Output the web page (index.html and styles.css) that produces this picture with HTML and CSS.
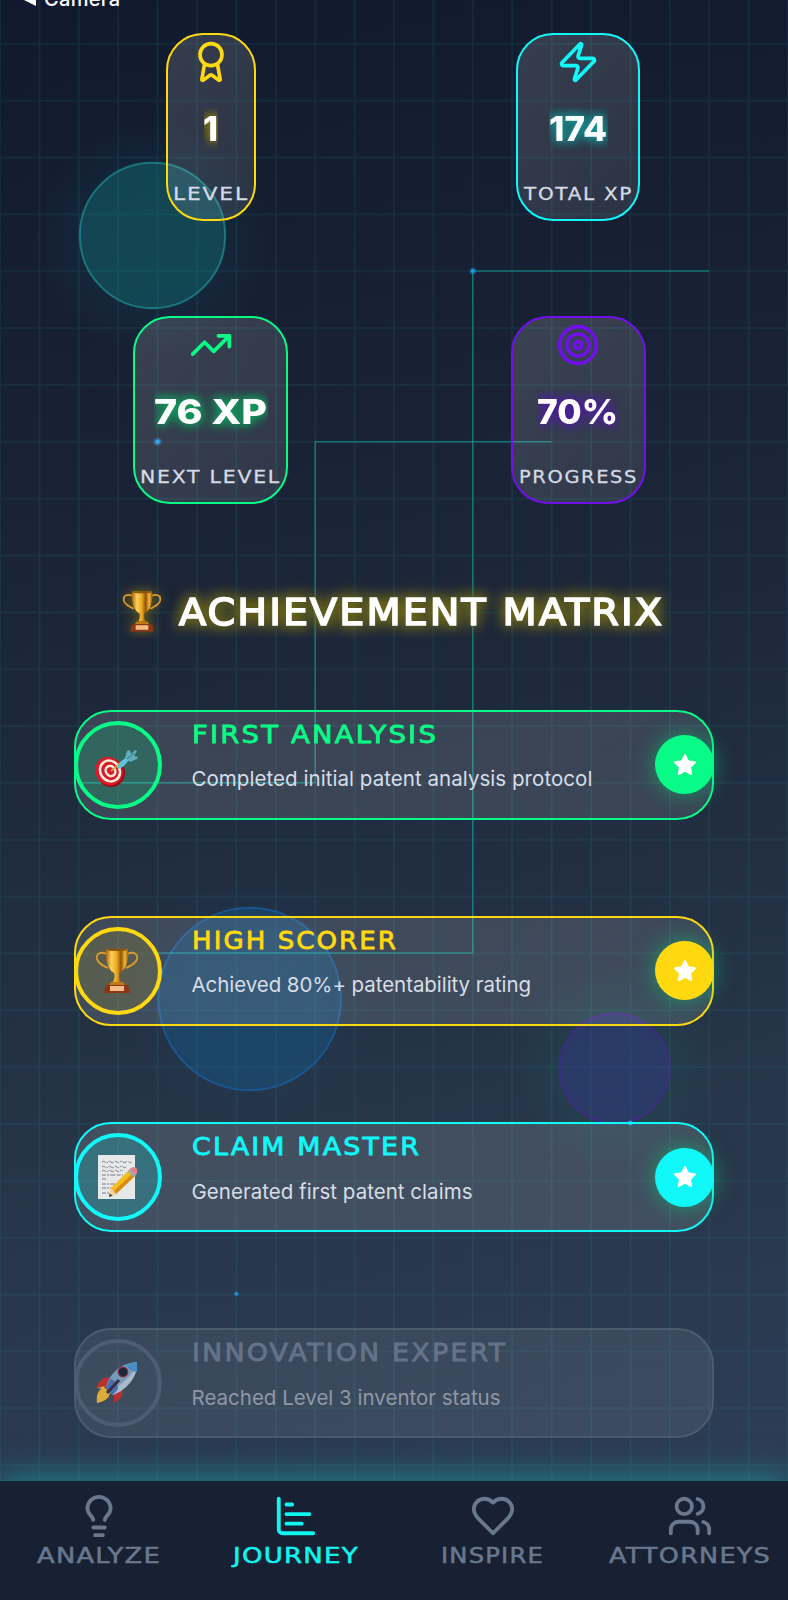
FILE: index.html
```html
<!DOCTYPE html>
<html lang="en">
<head>
<meta charset="utf-8">
<title>Journey</title>
<link rel="stylesheet" href="styles.css">
</head>
<body>
<svg class="backdrop" width="788" height="1600" viewBox="0 0 788 1600">
  <defs>
    <pattern id="grid" width="39.4" height="56.85" patternUnits="userSpaceOnUse" patternTransform="translate(0 -13)">
      <path d="M39.4 0V56.85M0 56.85H39.4M0 0V56.85M0 0H39.4" fill="none" stroke="#1fb5ad" stroke-opacity=".11" stroke-width="1.6"/>
    </pattern>
    <radialGradient id="halo-cyan"><stop offset=".55" stop-color="#00c8c8" stop-opacity=".055"/><stop offset="1" stop-color="#00c8c8" stop-opacity="0"/></radialGradient>
    <radialGradient id="halo-blue"><stop offset=".55" stop-color="#0080d0" stop-opacity=".05"/><stop offset="1" stop-color="#0080d0" stop-opacity="0"/></radialGradient>
    <radialGradient id="halo-green"><stop offset=".4" stop-color="#00c8a0" stop-opacity=".07"/><stop offset="1" stop-color="#00c8a0" stop-opacity="0"/></radialGradient>
  </defs>
  <rect width="788" height="1600" fill="url(#grid)"/>
  <circle cx="152.5" cy="235.5" r="118" fill="url(#halo-cyan)"/>
  <circle cx="152.5" cy="235.5" r="72.7" fill="#0fa0a0" fill-opacity=".25" stroke="#22b8b8" stroke-opacity=".5" stroke-width="2"/>
  <circle cx="249.7" cy="999" r="125" fill="url(#halo-blue)"/>
  <circle cx="249.7" cy="999" r="91.3" fill="#0a70b0" fill-opacity=".27" stroke="#147ad8" stroke-opacity=".42" stroke-width="2"/>
  <circle cx="614.5" cy="1068.5" r="105" fill="url(#halo-green)"/>
  <circle cx="614.5" cy="1068.5" r="55" fill="#4030b0" fill-opacity=".26" stroke="#6a14d0" stroke-opacity=".36" stroke-width="2"/>
  <g fill="none" stroke="#14b8ae" stroke-opacity=".5" stroke-width="1.5">
    <path d="M709 271H472.8V953H157.6"/>
    <path d="M551.5 441.7H315.2V782.8H78.8"/>
  </g>
  <g fill="#1d9be8">
    <g fill-opacity=".35"><circle cx="472.8" cy="271" r="3.5"/><circle cx="157.6" cy="441.7" r="4"/><circle cx="236.4" cy="1293.8" r="2.5"/></g>
    <circle cx="472.8" cy="271" r="2"/><circle cx="157.6" cy="441.7" r="2.2"/><circle cx="236.4" cy="1293.8" r="1.6"/><circle cx="630.4" cy="1123" r="2.4"/>
  </g>
</svg>

<svg width="0" height="0" class="symbols">
  <symbol id="trophy" viewBox="0 0 44 46">
    <defs><linearGradient id="gold"><stop offset="0" stop-color="#a95b0a"/><stop offset=".25" stop-color="#ffd35a"/><stop offset=".5" stop-color="#e9a41e"/><stop offset=".68" stop-color="#8c5206"/><stop offset=".85" stop-color="#f3b638"/><stop offset="1" stop-color="#a05a08"/></linearGradient></defs>
    <path d="M12 6C5 3 1 6 2 11c1 4 5 6 11 9M32 6c7-3 11 0 10 5-1 4-5 6-11 9" fill="none" stroke="#d99a2c" stroke-width="1.9"/>
    <path d="M11 1h22c1 10-1 20-8 24-1 2-1 5 1 9h-8c2-4 2-7 1-9-7-4-9-14-8-24z" fill="url(#gold)"/>
    <ellipse cx="22" cy="1.8" rx="11" ry="1.3" fill="#8f5709"/>
    <path d="M16 34h12l2 3H14z" fill="#c07818"/>
    <path d="M11 37h22l2 8H9z" fill="#8f3515"/><path d="M15 38h14v5H15z" fill="#f4bd86"/>
  </symbol>
  <symbol id="dart" viewBox="0 0 44 38">
    <ellipse cx="17" cy="24" rx="14" ry="14" fill="#9e0b18"/>
    <ellipse cx="15" cy="22" rx="13.500" ry="14.500" fill="#d91c2b" transform="rotate(-35 15 22)"/>
    <g fill="none" stroke="#fbeeda" stroke-width="2.5"><ellipse cx="16" cy="22" rx="9.6" ry="10.8" transform="rotate(-35 16 22)"/><ellipse cx="16.5" cy="22" rx="4.6" ry="5.3" transform="rotate(-35 16.5 22)"/></g>
    <path d="M17 22l9-8" stroke="#d9a53a" stroke-width="1.6"/>
    <path d="M23 18l3-5 7-5 2 3-5 6-5 3z" fill="#62c4d6"/>
    <path d="M31 9l2-7 3-1 1 4 4-4 2 1-3 5 4 1-1 2-7 3z" fill="#63aebc"/><path d="M33 10l7-6" stroke="#2f7286" stroke-width="1"/>
  </symbol>
  <symbol id="memo" viewBox="0 0 40 46">
    <path d="M1 1h37v44H1z" fill="#e7e8ea"/>
    <g fill="none" stroke="#6d6f75" stroke-width=".9" stroke-dasharray="4 1.2 2 1 5 1.5"><path d="M5 8q1.500-1.500 3 0t3 0 3 0 3 0 3 0 3 0 3 0 3 0 3 0 3 0M5 13q1.500-1.500 3 0t3 0 3 0 3 0 3 0 3 0 3 0 3 0M5 17q1.500-1.500 3 0t3 0 3 0 3 0 3 0 3 0 3 0M5 21h21M5 25h5M5 30h13M5 34h10M5 39h8"/></g>
    <path d="M12 43l2-9 19-19 6 6-20 19z" fill="#f5bd22"/><path d="M17 37l19-18 3 2-20 19z" fill="#d98c12"/>
    <path d="M12 43l2-9 5 6z" fill="#f0d3a0"/><path d="M12 43l.8-3.500 2.700 2.200z" fill="#333"/>
    <path d="M31 17l3-3 5 6-3 3z" fill="#9faab3"/><path d="M33 15q4-4 7 0 1 3-1 6z" fill="#ec7d8a"/>
  </symbol>
  <symbol id="rocket" viewBox="0 0 44 44">
    <path d="M15 17C8 15 4 20 1 27c4-2 9-1 12-1zM27 28c2 6-1 11-9 14 2-5 0-9 1-12z" fill="#c52f28"/>
    <path d="M9 26C3 29 1 34 2 42c6-1 12-4 13-10z" fill="#f0b534"/><path d="M2 27l8-2-2 3z" fill="#f3b53a"/>
    <path d="M11 27C13 15 24 2 42 1c1 14-9 27-24 33z" fill="#7fa4c4"/>
    <path d="M18 34C33 28 43 15 42 1c-3 12-12 20-27 30z" fill="#b5c6d4"/>
    <path d="M31 4l11-3v10C37 11 33 8 31 4z" fill="#4c95d2"/>
    <path d="M11 27l4-9c3 0 9 6 8 10l-5 6z" fill="#4b73b5"/><path d="M12 32l12-13" stroke="#392b42" stroke-width="3"/>
    <circle cx="28" cy="11" r="5.400" fill="#8e263b"/><circle cx="28" cy="11" r="4" fill="#182235"/>
  </symbol>
  <symbol id="star" viewBox="0 0 24 24"><path d="M12 2.200l3 6.200 6.900.9-5 4.800 1.200 6.900L12 17.600 5.900 21l1.200-6.900-5-4.800 6.900-.9z" fill="#fff" stroke="#fff" stroke-width="2.200" stroke-linejoin="round"/></symbol>
</svg>

<div class="screen">
  <div class="back-link"><svg width="12" height="12" viewBox="0 0 12 12"><path d="M0 6L12 0v12z" fill="#fff"/></svg><span>Camera</span></div>

  <section class="stats">
    <div class="stat gold w-level">
      <svg class="icon" viewBox="0 0 24 24"><path d="m15.477 12.890 1.515 8.526a.5.5 0 0 1-.81.470l-3.580-2.687a1 1 0 0 0-1.197 0l-3.586 2.686a.5.5 0 0 1-.81-.469l1.514-8.526"/><circle cx="12" cy="8" r="6"/></svg>
      <svg class="value" width="14" height="44"><text x="-1" y="34" textLength="15" lengthAdjust="spacingAndGlyphs">1</text></svg>
      <svg class="label" width="75" height="24"><text x="0" y="17.500" textLength="76" lengthAdjust="spacingAndGlyphs">LEVEL</text></svg>
    </div>
    <div class="stat cyan w-total">
      <svg class="icon" viewBox="0 0 24 24"><path d="M4 14a1 1 0 0 1-.78-1.630l9.900-10.200a.5.5 0 0 1 .86.460l-1.920 6.020A1 1 0 0 0 13 10h7a1 1 0 0 1 .78 1.630l-9.900 10.200a.5.5 0 0 1-.86-.460l1.920-6.020A1 1 0 0 0 11 14z"/></svg>
      <svg class="value" width="59" height="44"><text x="0" y="34" textLength="58" lengthAdjust="spacingAndGlyphs">174</text></svg>
      <svg class="label" width="108" height="24"><text x="0" y="17.500" textLength="109" lengthAdjust="spacingAndGlyphs">TOTAL XP</text></svg>
    </div>
    <div class="stat green w-next">
      <svg class="icon" viewBox="0 0 24 24"><path d="M22 7 13.500 15.500 8.500 10.500 2 17"/><path d="M16 7h6v6"/></svg>
      <svg class="value" width="114" height="44"><text x="0" y="34" textLength="113" lengthAdjust="spacingAndGlyphs">76 XP</text></svg>
      <svg class="label" width="141" height="24"><text x="0" y="17.500" textLength="141" lengthAdjust="spacingAndGlyphs">NEXT LEVEL</text></svg>
    </div>
    <div class="stat purple w-progress">
      <svg class="icon" viewBox="0 0 24 24"><circle cx="12" cy="12" r="10"/><circle cx="12" cy="12" r="6"/><circle cx="12" cy="12" r="2"/></svg>
      <svg class="value" width="82" height="44"><text x="0" y="34" textLength="81" lengthAdjust="spacingAndGlyphs">70%</text></svg>
      <svg class="label" width="119" height="24"><text x="0" y="17.500" textLength="119" lengthAdjust="spacingAndGlyphs">PROGRESS</text></svg>
    </div>
  </section>

  <h2 class="heading">
    <svg width="556" height="58"><use href="#trophy" x="3" y="8.500" width="40" height="46"/><text x="60" y="44.500" textLength="485" lengthAdjust="spacingAndGlyphs">ACHIEVEMENT MATRIX</text></svg>
  </h2>

  <section class="achievements">
    <article class="card green">
      <div class="medal"><svg class="low" width="44" height="38"><use href="#dart"/></svg></div>
      <div class="copy"><svg class="name" width="246" height="30"><text x="0" y="24" textLength="246" lengthAdjust="spacingAndGlyphs">FIRST ANALYSIS</text></svg><p class="d1">Completed initial patent analysis protocol</p></div>
      <div class="badge"><svg width="24" height="24"><use href="#star"/></svg></div>
    </article>
    <article class="card gold">
      <div class="medal"><svg width="44" height="46"><use href="#trophy"/></svg></div>
      <div class="copy"><svg class="name" width="206" height="30"><text x="0" y="24" textLength="206" lengthAdjust="spacingAndGlyphs">HIGH SCORER</text></svg><p class="d2">Achieved 80%+ patentability rating</p></div>
      <div class="badge"><svg width="24" height="24"><use href="#star"/></svg></div>
    </article>
    <article class="card cyan">
      <div class="medal"><svg width="40" height="46"><use href="#memo"/></svg></div>
      <div class="copy"><svg class="name" width="229" height="30"><text x="0" y="24" textLength="229" lengthAdjust="spacingAndGlyphs">CLAIM MASTER</text></svg><p class="d3">Generated first patent claims</p></div>
      <div class="badge"><svg width="24" height="24"><use href="#star"/></svg></div>
    </article>
    <article class="card locked">
      <div class="medal"><svg width="44" height="44"><use href="#rocket"/></svg></div>
      <div class="copy"><svg class="name" width="315" height="30"><text x="0" y="24" textLength="315" lengthAdjust="spacingAndGlyphs">INNOVATION EXPERT</text></svg><p class="d4">Reached Level 3 inventor status</p></div>
    </article>
  </section>

  <nav class="tabs">
    <a class="tab"><svg class="tab-icon" viewBox="0 0 24 24"><path d="M15 14c.2-1 .7-1.700 1.500-2.500 1-.9 1.500-2.200 1.500-3.500A6 6 0 0 0 6 8c0 1 .2 2.200 1.500 3.500.7.7 1.300 1.500 1.500 2.500"/><path d="M9 18h6M10 22h4"/></svg>
      <svg class="tab-label" width="124" height="24"><text x="0" y="18.500" textLength="124" lengthAdjust="spacingAndGlyphs">ANALYZE</text></svg></a>
    <a class="tab active"><svg class="tab-icon" viewBox="0 0 24 24"><path d="M3 3v16a2 2 0 0 0 2 2h16M7 16h8M7 11h12M7 6h3"/></svg>
      <svg class="tab-label" width="126" height="24"><text x="0" y="18.500" textLength="126" lengthAdjust="spacingAndGlyphs">JOURNEY</text></svg></a>
    <a class="tab"><svg class="tab-icon" viewBox="0 0 24 24"><path d="M19 14c1.490-1.460 3-3.210 3-5.500A5.500 5.500 0 0 0 16.500 3c-1.760 0-3 .5-4.500 2-1.500-1.500-2.740-2-4.500-2A5.500 5.500 0 0 0 2 8.500c0 2.300 1.500 4.050 3 5.500l7 7Z"/></svg>
      <svg class="tab-label" width="103" height="24"><text x="0" y="18.500" textLength="103" lengthAdjust="spacingAndGlyphs">INSPIRE</text></svg></a>
    <a class="tab"><svg class="tab-icon" viewBox="0 0 24 24"><path d="M16 21v-2a4 4 0 0 0-4-4H6a4 4 0 0 0-4 4v2"/><circle cx="9" cy="7" r="4"/><path d="M22 21v-2a4 4 0 0 0-3-3.870M16 3.130a4 4 0 0 1 0 7.750"/></svg>
      <svg class="tab-label" width="162" height="24"><text x="0" y="18.500" textLength="162" lengthAdjust="spacingAndGlyphs">ATTORNEYS</text></svg></a>
  </nav>
</div>
</body>
</html>
```

FILE: styles.css
```css
* { box-sizing: border-box; }
body {
  margin: 0;
  width: 788px;
  height: 1600px;
  overflow: hidden;
  background: linear-gradient(170deg, #10192d 0%, #192235 27%, #1e293c 45%, #263548 68%, #2d3d54 92%, #303f57 100%);
  font-family: Inter, "Liberation Sans", sans-serif;
  color: #fff;
}
.backdrop { position: absolute; top: 0; left: 0; }
.symbols { position: absolute; }
svg { display: block; flex: none; }
.screen { position: relative; height: 1600px; display: flex; flex-direction: column; }

.gold { --accent: #ffd90f; --glow: #8a7410; --tint: rgba(255, 217, 15, .13); }
.cyan { --accent: #10f8f8; --glow: #14908f; --tint: rgba(16, 245, 245, .2); }
.green { --accent: #08fb86; --glow: #109a5a; --tint: rgba(8, 251, 134, .18); }
.purple { --accent: #7210ec; --glow: #4c1c9c; --tint: rgba(114, 16, 236, .2); }

.back-link {
  height: 32.500px;
  flex: none;
  padding-left: 24px;
  display: flex;
  gap: 8px;
  font-size: 20px;
  font-weight: 500;
  line-height: 24px;
  letter-spacing: .3px;
}
.back-link svg { margin-top: -6px; }
.back-link span { margin-top: -13px; }

.stats {
  display: grid;
  grid-template-columns: 1fr 1fr;
  justify-items: center;
  row-gap: 95.500px;
  padding: 0 26px 0 27px;
}
.stat {
  height: 188px;
  padding-top: 5px;
  display: flex;
  flex-direction: column;
  align-items: center;
  border: 2px solid var(--accent);
  border-radius: 37px;
  background: linear-gradient(140deg, rgba(255, 255, 255, .15), rgba(255, 255, 255, .09));
}
.w-level { width: 90px; }
.w-total { width: 124px; }
.w-next { width: 155px; }
.w-progress { width: 135px; }
.icon {
  width: 44px;
  height: 44px;
  fill: none;
  stroke: var(--accent);
  stroke-width: 2;
  stroke-linecap: round;
  stroke-linejoin: round;
}
.value { margin: 23px 0 31px; overflow: hidden; }
.value text {
  font-size: 34px;
  font-weight: 800;
  fill: #fff;
  filter: drop-shadow(0 0 6px var(--glow)) drop-shadow(0 0 3px var(--glow));
}
.label { overflow: visible; }
.label text {
  font: 17.500px "DejaVu Sans", sans-serif;
  letter-spacing: 1.500px;
  fill: #d5dae3;
  stroke: #d5dae3;
  stroke-width: .3px;
}

.heading { margin: 76px 0 0 119px; height: 58px; }
.heading svg { overflow: hidden; }
.heading use { filter: drop-shadow(0 0 6px #7a6c10); }
.heading text {
  font: 38px "DejaVu Sans", sans-serif;
  letter-spacing: 2px;
  fill: #fff;
  stroke: #fff;
  stroke-width: 1.700px;
  filter: drop-shadow(0 0 7px #6f6818) drop-shadow(0 0 6px #6f6818);
}

.achievements {
  display: flex;
  flex-direction: column;
  gap: 96.200px;
  padding: 71.700px 74px 0;
}
.card {
  height: 110px;
  display: flex;
  align-items: center;
  border: 2px solid var(--accent);
  border-radius: 37px;
  background: linear-gradient(160deg, rgba(255, 255, 255, .135), rgba(255, 255, 255, .115));
}
.medal {
  flex: none;
  width: 88px;
  height: 88px;
  margin-left: -2px;
  display: flex;
  align-items: center;
  justify-content: center;
  border: 4px solid var(--accent);
  border-radius: 50%;
  background: var(--tint);
}
.medal svg { margin-right: 2px; }
.medal .low { margin: 6px 4px 0 0; }
.copy { flex: 1; height: 100%; padding: 7px 0 0 29.500px; }
.name { overflow: visible; }
.name text {
  font: 25px "DejaVu Sans", sans-serif;
  letter-spacing: 2px;
  fill: var(--accent);
  stroke: var(--accent);
  stroke-width: .8px;
}
.copy p {
  margin: 15.500px 0 0;
  font-size: 20.500px;
  line-height: 30px;
  white-space: nowrap;
  color: #d8dde6;
}
.copy .d1 { letter-spacing: .05px; }
.copy .d2 { letter-spacing: -.06px; }
.copy .d3 { letter-spacing: .03px; }
.badge {
  flex: none;
  width: 59px;
  height: 59px;
  margin-right: -2px;
  display: flex;
  align-items: center;
  justify-content: center;
  border-radius: 50%;
  background: var(--accent);
  box-shadow: 0 0 22px rgba(0, 220, 120, .55);
}
.locked { --accent: #65738a; --tint: rgba(255, 255, 255, .02); border-color: #4d5b6f; background: rgba(255, 255, 255, .08); }
.locked .medal { border-color: #4d5d73; }
.locked .medal svg { opacity: .9; }
.locked p { color: #8f98a8; }

.tabs {
  height: 120px;
  margin-top: auto;
  padding-top: 11.500px;
  display: grid;
  grid-template-columns: repeat(4, 1fr);
  background: #172133;
  border-top: 1px solid #1d5f6b;
  box-shadow: 0 -4px 28px rgba(20, 190, 190, .5);
}
.tab { display: flex; flex-direction: column; align-items: center; gap: 5px; color: #69788e; }
.tab.active { color: #0ff5f0; }
.tab-icon {
  width: 46px;
  height: 46px;
  fill: none;
  stroke: currentColor;
  stroke-width: 2;
  stroke-linecap: round;
  stroke-linejoin: round;
}
.tab-label { overflow: visible; }
.tab-label text {
  font: 20.500px "DejaVu Sans", sans-serif;
  letter-spacing: 1px;
  fill: currentColor;
  stroke: currentColor;
  stroke-width: .5px;
}
```
